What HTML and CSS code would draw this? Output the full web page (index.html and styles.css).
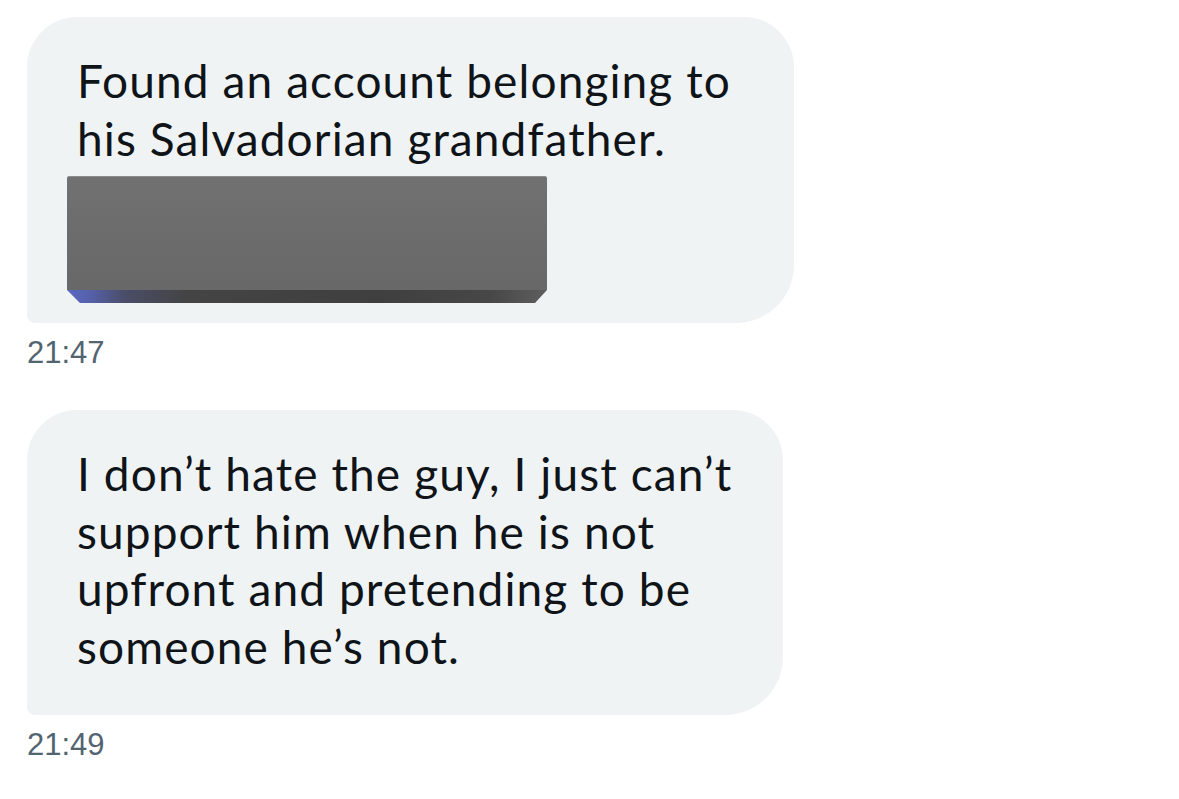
FILE: index.html
```html
<!DOCTYPE html>
<html lang="en">
<head>
<meta charset="utf-8">
<title>Messages</title>
<link rel="stylesheet" href="styles.css">
</head>
<body>
<main class="thread">
  <div class="message">
    <div class="bubble bubble-first">
      <p class="text">Found an account belonging to<br>his Salvadorian grandfather.</p>
      <div class="redact">
        <div class="redact-face"></div>
        <div class="redact-edge"></div>
      </div>
    </div>
    <div class="time">21:47</div>
  </div>
  <div class="message">
    <div class="bubble bubble-second">
      <p class="text">I don’t hate the guy, I just can’t<br>support him when he is not<br>upfront and pretending to be<br>someone he’s not.</p>
    </div>
    <div class="time">21:49</div>
  </div>
</main>
</body>
</html>
```

FILE: styles.css
```css
html, body {
  margin: 0;
  padding: 0;
  background: #ffffff;
}

.thread {
  display: flex;
  flex-direction: column;
  gap: 39px;
  padding: 17px 0 0 27px;
}

.message {
  display: flex;
  flex-direction: column;
  align-items: flex-start;
}

.bubble {
  background: #eff3f4;
  border-radius: 50px 50px 58px 8px;
  box-sizing: border-box;
  padding: 35px 40px 0 50px;
}

.bubble-first {
  width: 767px;
  height: 306px;
}

.bubble-second {
  width: 756px;
  height: 305px;
}

.text {
  margin: 0;
  font-family: Lato, "Open Sans", sans-serif;
  font-size: 46px;
  letter-spacing: 1.1px;
  line-height: 57.5px;
  color: #0f1419;
}

.redact {
  margin: 9px 0 0 -10px;
  width: 480px;
  display: flex;
  flex-direction: column;
}

.redact-face {
  height: 113px;
  background: linear-gradient(180deg, #717171 0%, #6c6c6c 50%, #686868 100%);
  border-top: 1px solid #8c8c8c;
  border-radius: 2px 2px 0 0;
}

.redact-edge {
  height: 13px;
  background: linear-gradient(90deg, #5b68c4 0%, #5560a8 5%, #4a4d68 12%, #444444 25%, #3f3f3f 65%, #474747 88%, #5e5e5e 100%);
  clip-path: polygon(0 0, 100% 0, 97.5% 100%, 2.7% 100%);
}

.time {
  margin-top: 12px;
  font-family: "Liberation Sans", Arial, sans-serif;
  font-size: 31px;
  line-height: 36px;
  color: #536471;
}
```
